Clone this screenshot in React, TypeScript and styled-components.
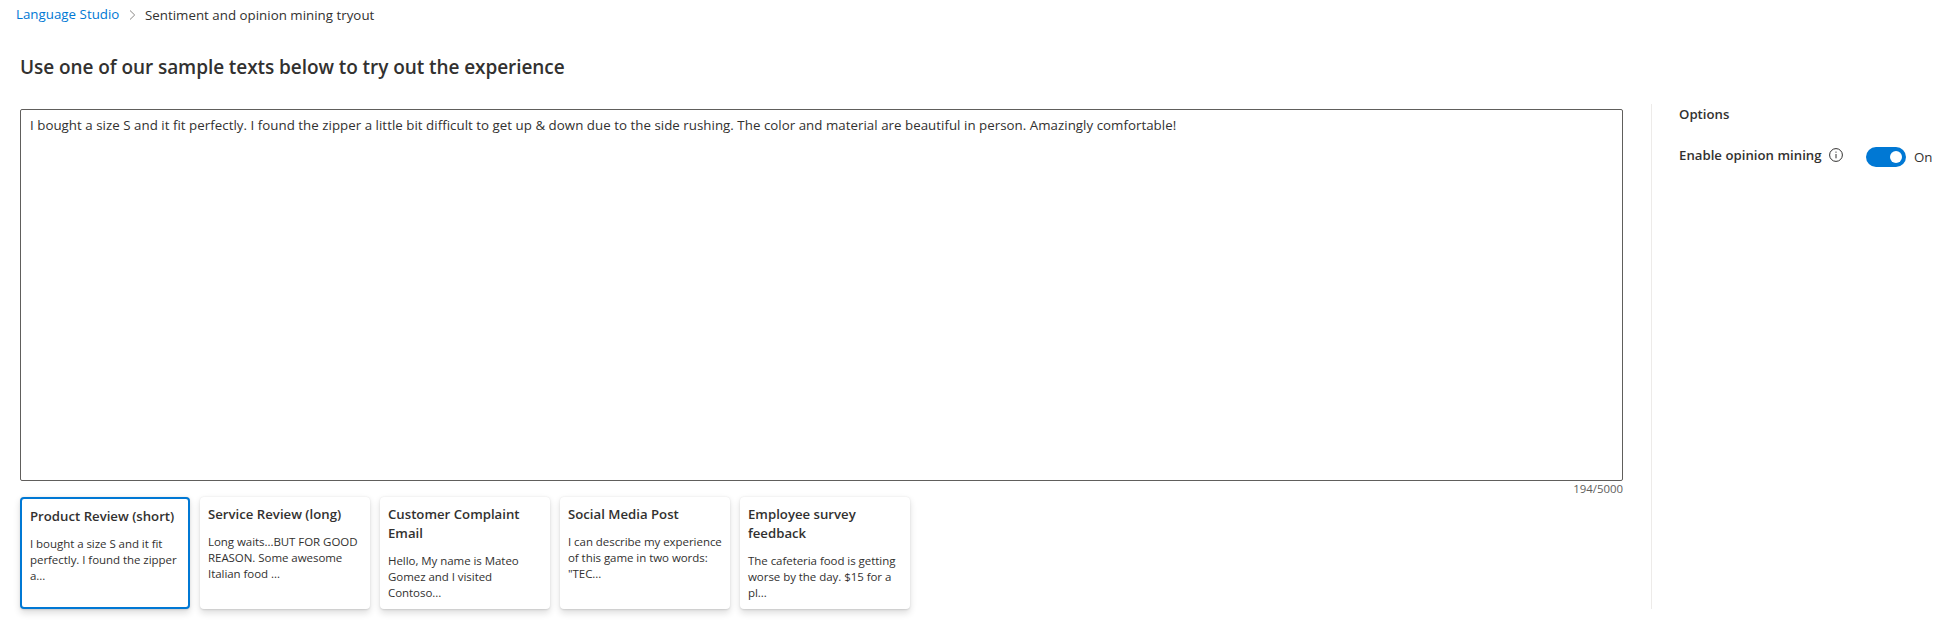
import React, { useState } from 'react';
import styled, { createGlobalStyle } from 'styled-components';

const GlobalStyle = createGlobalStyle`
  *, *::before, *::after { box-sizing: border-box; }
  body {
    margin: 0;
    background: #fff;
    color: #323130;
    font-family: "Open Sans", sans-serif;
    font-size: 13.3px;
    line-height: 20px;
  }
  h1, h2, h3, p { margin: 0; }
`;

const Page = styled.div`
  height: 644px;
  overflow: hidden;
`;

const Breadcrumb = styled.nav`
  display: flex;
  align-items: flex-start;
  height: 53px;
  padding: 4px 0 0 16px;
  letter-spacing: 0.02px;
`;

const CrumbLink = styled.a`
  width: 104px;
  color: #0078d4;
  text-decoration: none;
`;

const CrumbChevron = styled.svg`
  width: 7px;
  height: 10px;
  margin: 6px 9px 0 9px;
  fill: none;
  stroke: #8a8886;
`;

const CrumbCurrent = styled.span`
  padding-top: 1px;
`;

const Heading = styled.h1`
  height: 51px;
  padding-left: 20px;
  font-size: 19px;
  font-weight: 600;
  line-height: 28px;
  letter-spacing: -0.07px;
`;

const Workspace = styled.main`
  display: flex;
  height: 505px;
`;

const Editor = styled.section`
  display: flex;
  flex-direction: column;
  width: 1603px;
  margin-left: 20px;
  padding-top: 5px;
`;

const TextInput = styled.textarea`
  display: block;
  width: 100%;
  height: 372px;
  padding: 5px 8px 5px 9px;
  border: 1px solid #605e5c;
  border-radius: 2px;
  outline: none;
  resize: none;
  background: #fff;
  color: #323130;
  font: inherit;
  letter-spacing: 0.032px;
`;

const Counter = styled.div`
  align-self: flex-end;
  color: #605e5c;
  font-size: 11.4px;
  line-height: 16px;
`;

const SampleList = styled.div`
  display: flex;
  gap: 10px;
`;

const SampleCard = styled.button<{ $selected: boolean }>`
  display: flex;
  flex-direction: column;
  gap: 10px;
  width: 170px;
  height: 112px;
  padding: 8px 0 0 8px;
  border: ${(p) => (p.$selected ? '2px solid #0078d4' : 'none')};
  border-radius: 4px;
  background: #fff;
  box-shadow: 0 3.2px 7.2px rgba(0, 0, 0, 0.132), 0 0.6px 1.8px rgba(0, 0, 0, 0.108);
  color: inherit;
  font-family: inherit;
  text-align: left;
  cursor: pointer;
`;

const SampleTitle = styled.span`
  display: block;
  font-size: 13.2px;
  font-weight: 600;
  line-height: 19px;
  white-space: pre-line;
`;

const SampleExcerpt = styled.span`
  display: block;
  font-size: 11.5px;
  line-height: 16px;
  letter-spacing: -0.05px;
  white-space: pre-line;
`;

const OptionsPanel = styled.aside`
  flex: 1;
  margin-left: 28px;
  padding-left: 27px;
  border-left: 1px solid #edebe9;
`;

const OptionsTitle = styled.h2`
  height: 43px;
  font-size: 13.2px;
  font-weight: 600;
  line-height: 20px;
`;

const OptionRow = styled.div`
  display: flex;
  align-items: flex-start;
`;

const OptionLabel = styled.span`
  width: 150px;
  margin-top: -2px;
  font-size: 13.2px;
  font-weight: 600;
  letter-spacing: 0.02px;
`;

const InfoIcon = styled.svg`
  width: 14px;
  height: 14px;
  margin-right: 23px;
  margin-top: 1px;
`;

const Toggle = styled.button`
  display: flex;
  align-items: center;
  justify-content: flex-end;
  width: 40px;
  height: 20px;
  padding: 0 4px;
  border: 0;
  border-radius: 10px;
  background: #0078d4;
  cursor: pointer;
`;

const Knob = styled.span`
  width: 12px;
  height: 12px;
  border-radius: 50%;
  background: #fff;
`;

const ToggleState = styled.span`
  margin-left: 8px;
`;

const samples = [
  { title: 'Product Review (short)', excerpt: 'I bought a size S and it fit\nperfectly. I found the zipper\na...' },
  { title: 'Service Review (long)', excerpt: 'Long waits...BUT FOR GOOD\nREASON. Some awesome\nItalian food ...' },
  { title: 'Customer Complaint\nEmail', excerpt: 'Hello, My name is Mateo\nGomez and I visited\nContoso...' },
  { title: 'Social Media Post', excerpt: 'I can describe my experience\nof this game in two words:\n"TEC...' },
  { title: 'Employee survey\nfeedback', excerpt: 'The cafeteria food is getting\nworse by the day. $15 for a\npl...' },
];

const reviewText =
  'I bought a size S and it fit perfectly. I found the zipper a little bit difficult to get up & down due to the side rushing. The color and material are beautiful in person. Amazingly comfortable!';

export default function App() {
  const [text, setText] = useState(reviewText);
  const [selected, setSelected] = useState(0);

  return (
    <Page>
      <GlobalStyle />
      <Breadcrumb>
        <CrumbLink href="#">Language Studio</CrumbLink>
        <CrumbChevron viewBox="0 0 7 10">
          <path d="M1 0.5 5.7 5 1 9.5" />
        </CrumbChevron>
        <CrumbCurrent>Sentiment and opinion mining tryout</CrumbCurrent>
      </Breadcrumb>
      <Heading>Use one of our sample texts below to try out the experience</Heading>
      <Workspace>
        <Editor>
          <TextInput value={text} spellCheck={false} onChange={(e) => setText(e.target.value)} />
          <Counter>{text.length}/5000</Counter>
          <SampleList>
            {samples.map((s, i) => (
              <SampleCard key={s.title} $selected={i === selected} onClick={() => setSelected(i)}>
                <SampleTitle>{s.title}</SampleTitle>
                <SampleExcerpt>{s.excerpt}</SampleExcerpt>
              </SampleCard>
            ))}
          </SampleList>
        </Editor>
        <OptionsPanel>
          <OptionsTitle>Options</OptionsTitle>
          <OptionRow>
            <OptionLabel>Enable opinion mining</OptionLabel>
            <InfoIcon viewBox="0 0 14 14">
              <circle cx="7" cy="7" r="6.4" fill="none" stroke="#323130" />
              <path d="M7 6v4.3" stroke="#323130" />
              <circle cx="7" cy="4.1" r="0.7" fill="#323130" />
            </InfoIcon>
            <Toggle role="switch" aria-checked="true">
              <Knob />
            </Toggle>
            <ToggleState>On</ToggleState>
          </OptionRow>
        </OptionsPanel>
      </Workspace>
    </Page>
  );
}
